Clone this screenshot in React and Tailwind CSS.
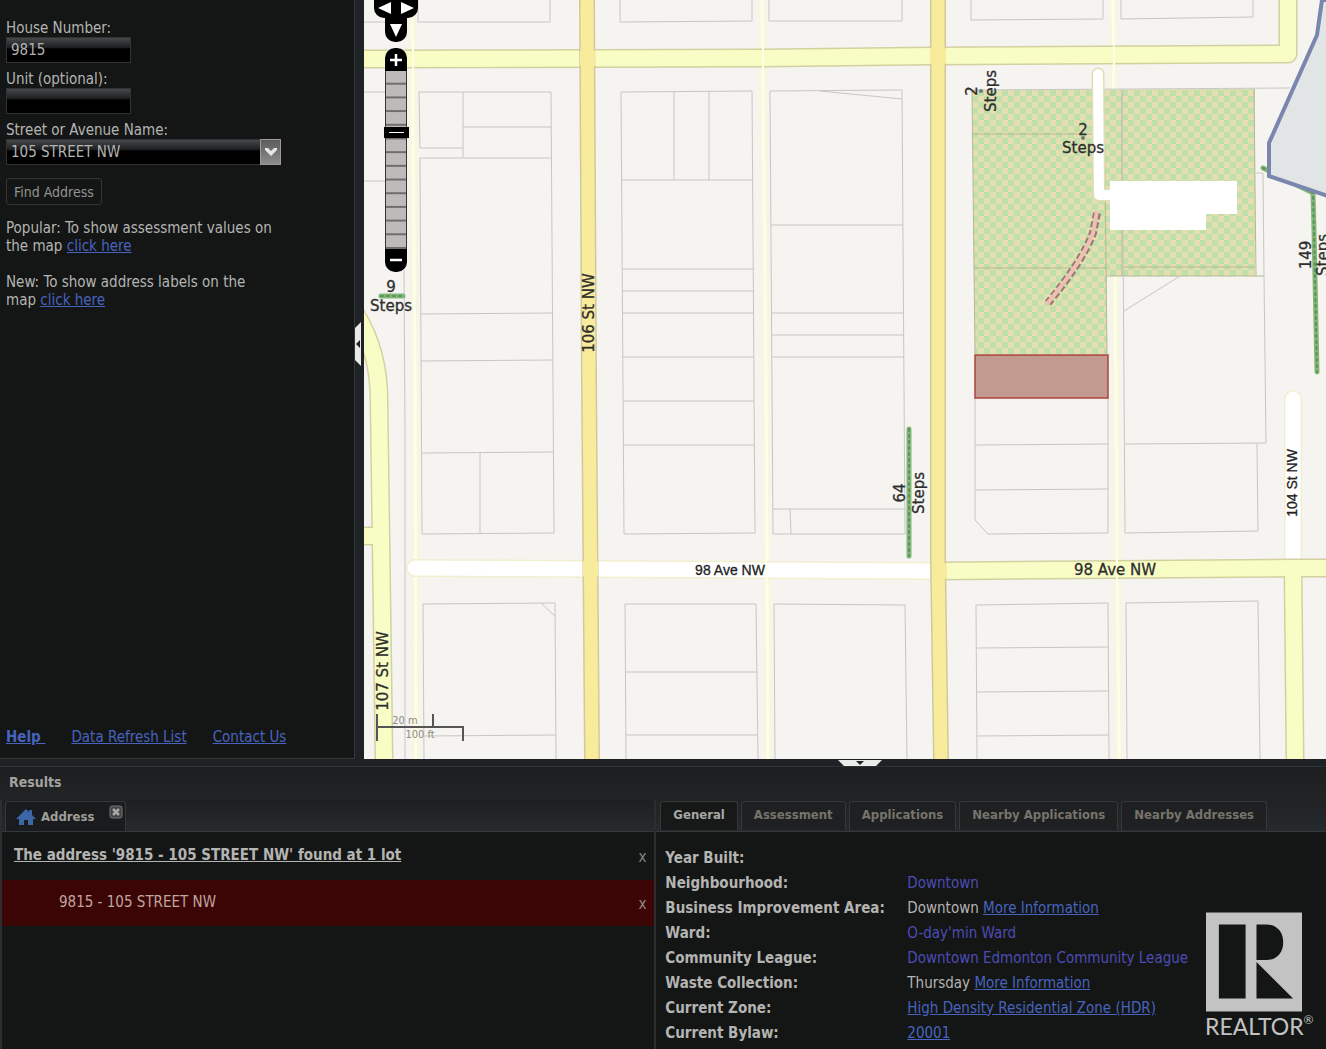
import { useState } from "react";

const LOT_LINES = [
  // far west
  "M364 22H405 M364 92H405 M364 181H386 M404 270L405 430V759",
  // 107 St to 106 St
  "M418 0V22L550 22V0",
  "M419 92H551L554 533L422 534L420 158H552 M419 92L420 148H463 M463 92V157 M463 127H551",
  "M421 314L553 313 M421 361L553 360 M422 453L554 452 M480 453V534",
  "M424 759L423 604L555 603L556 759 M542 604L555 616 M424 736L556 735",
  // 106 St to the lane
  "M620 0V22L752 21V0",
  "M621 92L752 91L755 533L624 534Z M674 92V180 M709 92V180 M621 180H753",
  "M622 269H754 M622 291H754 M622 313H754 M622 357H754 M623 401H754 M623 445H755",
  "M626 759L625 604L756 604L758 759 M625 672H757 M626 735H757",
  // lane to 105 St
  "M769 0V21H902V0",
  "M770 91L902 90L905 534H773Z M820 91L902 99 M771 225H903 M772 313H904 M772 335H904 M772 357H904",
  "M773 509H905 M790 509L791 534",
  "M775 759L774 604L905 605L907 759",
  // 105 St to the lane
  "M971 0V20L1103 19V0",
  "M975 398V520L988 534L1108 533V398 M975 445L1108 444 M976 490L1108 489",
  "M977 759L976 605L1108 603L1109 759 M977 648L1109 647 M977 692L1109 691 M977 736L1109 735",
  // lane to 104 St
  "M1121 0V19L1253 17V0",
  "M972 90L1290 88 M1264 275L1266 443L1125 444 M1124 311L1180 276 M1256 173H1263L1264 275",
  "M1257 444L1258 531L1125 533L1122 90",
  "M1127 759L1126 603L1258 601L1260 759",
];

const LANES = [
  "M412 0L415 380L416 759",
  "M762 0L766 380L768 759",
  "M1113 0L1117 540L1119 759",
];

const YELLOW_ROADS = [
  "M364 59L760 58L932 56L1288 54V0",
  "M346 300C368 328 379 360 379 400L381 540L384 759",
  "M364 536H381",
  "M940 571L1292 568H1326",
  "M1293 568L1295 759",
];

const MAIN_ROADS = ["M587 0L589 380L592 759", "M938 0V560L941 759"];

const WHITE_ROADS = ["M415 568L930 571", "M1293 399V560"];

const LABEL =
  "fill-[#2e2e2e] stroke-[#2e2e2e] font-['DejaVu_Sans',sans-serif] text-[15px]";
const SMALL_LABEL =
  "fill-[#222] stroke-[#222] font-['Liberation_Sans',Arial,sans-serif] text-[14px]";

function Roads({ paths, casing, fill, width, cap = "butt" }) {
  return (
    <g fill="none" strokeLinejoin="round" strokeLinecap={cap}>
      {paths.map((d) => (
        <path key={`c${d}`} d={d} stroke={casing} strokeWidth={width + 3} />
      ))}
      {paths.map((d) => (
        <path key={d} d={d} stroke={fill} strokeWidth={width} />
      ))}
    </g>
  );
}

function Steps({ d }) {
  return (
    <g fill="none" strokeLinecap="round">
      <path d={d} stroke="#82b778" strokeWidth="5" />
      <path d={d} stroke="#5f8f5a" strokeWidth="2" strokeDasharray="2 4" />
    </g>
  );
}

function StreetMap() {
  return (
    <svg
      className="absolute inset-0 h-full w-full"
      viewBox="364 0 962 759"
      preserveAspectRatio="xMinYMin slice"
      role="img"
      aria-label="Street map"
    >
      <defs>
        <pattern
          id="park"
          width="12"
          height="12"
          patternUnits="userSpaceOnUse"
        >
          <rect width="12" height="12" fill="#e4dfb0" />
          <rect width="6" height="6" fill="#c0dfaa" />
          <rect x="6" y="6" width="6" height="6" fill="#c0dfaa" />
        </pattern>
      </defs>

      <rect x="364" width="962" height="759" fill="#f5f4f1" />

      <g fill="none">
        {LANES.map((d) => (
          <path key={`h${d}`} d={d} stroke="#f7f6e2" strokeWidth="9" />
        ))}
        {LANES.map((d) => (
          <path key={d} d={d} stroke="#fdfee8" strokeWidth="3" />
        ))}
      </g>

      <path d="M972 90L1255 89V276H1107V354H975Z" fill="url(#park)" />
      <g stroke="#b7b795" fill="none">
        <path d="M972 90L975 354M1104 90L1107 354M972 134H1104M974 268H1107" />
        <path d="M1122 90V276M1254 89L1256 276M1123 267H1255M1107 276H1264" />
      </g>

      <g stroke="#c8c6c4" fill="none">
        {LOT_LINES.map((d) => (
          <path key={d} d={d} />
        ))}
      </g>

      <Roads
        paths={WHITE_ROADS}
        casing="#f2efcf"
        fill="#ffffff"
        width={15}
        cap="round"
      />
      <Roads
        paths={["M1098 74L1099 194M1099 195H1112"]}
        casing="#e0dfb4"
        fill="#ffffff"
        width={10}
        cap="round"
      />
      <path d="M1110 181H1237V214H1206V230H1110Z" fill="#fff" />
      <Roads paths={YELLOW_ROADS} casing="#d3d1a0" fill="#f8fdc5" width={16} />
      <Roads paths={MAIN_ROADS} casing="#d2c89b" fill="#f9eb9c" width={13} />
      {/* joins where the crossing streets meet the main roads */}
      <path
        d="M580 58H595M930 56H946M583 569H598M932 571H947"
        stroke="#f9eb9c"
        strokeWidth="15"
      />
      <path
        d="M413 48V69M763 48V68M1114 46V65M1117 559V580M766 560V580"
        stroke="#feffe6"
        strokeWidth="2"
      />

      <g fill="none">
        <path
          d="M1097 213L1093 233Q1082 262 1048 303"
          stroke="#9c7974"
          strokeWidth="8"
          strokeDasharray="6 3"
        />
        <path
          d="M1097 211L1093 233Q1082 262 1047 304"
          stroke="#efc0b2"
          strokeWidth="4"
        />
      </g>

      <Steps d="M1263 168L1313 193L1314 230L1317 372" />
      <path
        d="M1340 0H1322L1317 35L1269 143V176L1340 200Z"
        fill="#e1e5e6"
        stroke="#7a86ae"
        strokeWidth="4"
      />
      <Steps d="M909 429V556" />
      <Steps d="M381 296H403" />
      <circle cx="981" cy="91" r="2" fill="#777" />
      <circle cx="1083" cy="138" r="2" fill="#777" />

      <rect
        x="975"
        y="355"
        width="133"
        height="43"
        fill="#c39a90"
        stroke="#a8453b"
        strokeWidth="1.5"
      />

      <g textAnchor="middle" strokeWidth="0.3" className={LABEL}>
        <text x="1115" y="575">98 Ave NW</text>
        <text transform="translate(594 313) rotate(-90)">106 St NW</text>
        <text transform="translate(388 671) rotate(-90)">107 St NW</text>
        <text x="391" y="292">9</text>
        <text x="391" y="311">Steps</text>
        <text x="1083" y="135">2</text>
        <text x="1083" y="153">Steps</text>
        <text transform="translate(977 91) rotate(-90)">2</text>
        <text transform="translate(996 91) rotate(-90)">Steps</text>
        <text transform="translate(905 493) rotate(-90)">64</text>
        <text transform="translate(924 493) rotate(-90)">Steps</text>
        <text transform="translate(1311 255) rotate(-90)">149</text>
        <text transform="translate(1328 255) rotate(-90)">Steps</text>
      </g>
      <g textAnchor="middle" strokeWidth="0.3" className={SMALL_LABEL}>
        <text x="730" y="575">98 Ave NW</text>
        <text transform="translate(1297 483) rotate(-90)">104 St NW</text>
      </g>
    </svg>
  );
}

function MapControls() {
  const [zoom, setZoom] = useState(4);

  return (
    <div className="absolute left-[10px] top-0 flex w-11 flex-col items-center">
      <div className="flex h-[18px] w-full justify-between rounded-b-[10px] bg-black px-1">
        <button aria-label="Pan left">
          <svg width="14" height="18" viewBox="0 0 14 18" fill="#fff">
            <path d="M0 8L13 2V14Z" />
          </svg>
        </button>
        <button aria-label="Pan right">
          <svg width="14" height="18" viewBox="0 0 14 18" fill="#fff">
            <path d="M14 8L1 2V14Z" />
          </svg>
        </button>
      </div>
      <button
        aria-label="Pan down"
        className="flex h-6 w-[22px] justify-center rounded-b-[10px] bg-black pt-1"
      >
        <svg width="12" height="16" viewBox="0 0 12 16" fill="#fff">
          <path d="M0 2H12L6 15Z" />
        </svg>
      </button>
      <button
        aria-label="Zoom in"
        onClick={() => setZoom(Math.max(0, zoom - 1))}
        className="mt-[6px] flex h-[23px] w-[22px] items-center justify-center rounded-t-[10px] bg-black"
      >
        <svg width="12" height="13" viewBox="0 0 12 13" stroke="#fff">
          <path d="M0 7H12M6 1V13" strokeWidth="2.5" />
        </svg>
      </button>
      <input
        type="range"
        aria-label="Zoom level"
        min="0"
        max="12"
        value={zoom}
        onChange={(e) => setZoom(Number(e.target.value))}
        className="h-[178px] w-[22px] appearance-none border-l border-r border-[#333] bg-[linear-gradient(to_bottom,#bdbab9_12px,#6f6d6c_12px)] [background-size:100%_7.69%] [writing-mode:vertical-lr]
                   [&::-webkit-slider-thumb]:h-[11px] [&::-webkit-slider-thumb]:w-[25px] [&::-webkit-slider-thumb]:appearance-none
                   [&::-webkit-slider-thumb]:border-l-[5px] [&::-webkit-slider-thumb]:border-r-[5px] [&::-webkit-slider-thumb]:border-black
                   [&::-webkit-slider-thumb]:bg-[linear-gradient(to_bottom,#000_5px,#fff_5px,#fff_6px,#000_6px)]"
      />
      <button
        aria-label="Zoom out"
        onClick={() => setZoom(Math.min(12, zoom + 1))}
        className="flex h-[23px] w-[22px] items-center justify-center rounded-b-[10px] bg-black"
      >
        <svg width="12" height="12" viewBox="0 0 12 12" stroke="#fff">
          <path d="M0 5H12" strokeWidth="2.5" />
        </svg>
      </button>
    </div>
  );
}

function ScaleLine() {
  return (
    <div className="absolute bottom-[18px] left-3 text-center font-['DejaVu_Sans_Condensed','DejaVu_Sans',sans-serif] text-[11px] leading-[14px] text-[#8c8c86]">
      <div className="h-[14px] w-[58px] border-x-2 border-b-2 border-[#555]">
        20 m
      </div>
      <div className="-mt-[2px] h-[15px] w-[88px] border-x-2 border-t-2 border-[#555]">
        100 ft
      </div>
    </div>
  );
}

const FIELD =
  "block h-[26px] rounded-none border border-[#303334] bg-[linear-gradient(to_bottom,#46494b_0%,#1c1e1f_40%,#000_45%)] px-1 leading-[18px] text-[#b4b4b2] outline-none";
const LINK = "text-[#4763be] underline";

function SearchPanel() {
  return (
    <aside className="flex w-[355px] shrink-0 flex-col border-b border-r border-[#34383a] bg-[#141616] px-[6px] pt-[19px] leading-[18px]">
      <form onSubmit={(e) => e.preventDefault()}>
        <label htmlFor="house" className="block">
          House Number:
        </label>
        <input id="house" defaultValue="9815" className={`${FIELD} w-[125px]`} />

        <label htmlFor="unit" className="mt-[7px] block">
          Unit (optional):
        </label>
        <input id="unit" className={`${FIELD} w-[125px]`} />

        <label htmlFor="street" className="mt-[7px] block">
          Street or Avenue Name:
        </label>
        <div className="relative w-[275px]">
          <select
            id="street"
            className={`${FIELD} w-full appearance-none`}
          >
            <option>105 STREET NW</option>
          </select>
          <span className="pointer-events-none absolute right-0 top-0 flex h-[26px] w-[21px] items-center justify-center border border-[#9a9a9a] bg-gradient-to-b from-[#5c5c5c] to-[#8d8d8d]">
            <svg width="12" height="8" viewBox="0 0 12 8">
              <path d="M0 0H3L6 3L9 0H12V2L6 8L0 2Z" fill="#e6e6e6" />
            </svg>
          </span>
        </div>

        <button className="mt-[13px] h-[27px] rounded-[3px] border border-[#333637] px-[7px] text-[14px] text-[#939391]">
          Find Address
        </button>
      </form>

      <p className="mt-[14px] w-[270px]">
        Popular: To show assessment values on the map{" "}
        <a href="#values" className={LINK}>
          click here
        </a>
      </p>
      <p className="mt-[18px] w-[270px]">
        New: To show address labels on the map{" "}
        <a href="#labels" className={LINK}>
          click here
        </a>
      </p>

      <nav className="mt-auto flex gap-[26px] pb-3">
        <a href="#help" className={`${LINK} whitespace-pre font-bold`}>
          {"Help "}
        </a>
        <a href="#refresh" className={LINK}>
          Data Refresh List
        </a>
        <a href="#contact" className={LINK}>
          Contact Us
        </a>
      </nav>
    </aside>
  );
}

function ResultsList() {
  return (
    <section className="flex w-[49.5%] shrink-0 flex-col border-x-2 border-[#2b2e30] bg-[#141616]">
      <div className="flex h-8 items-end border-b border-[#34383a] bg-gradient-to-b from-[#1d2021] to-[#262a2d] pl-[3px]">
        <div className="flex h-[30px] w-[121px] rounded-t-[3px] border-x border-t border-[#34383a] bg-[#191b1c] pl-[10px]">
          <svg width="20" height="18" viewBox="0 0 20 18" className="mt-[6px]">
            <path
              d="M10 1L13 4V2H16V7L20 11H17V17H12V12H8V17H3V11H0Z"
              fill="#3b67a8"
            />
          </svg>
          <span className="ml-[5px] mt-[6px] text-[13px] font-bold leading-[18px] text-[#a09f9a]">
            Address
          </span>
          <button
            aria-label="Close tab"
            className="ml-auto mr-[2px] mt-[3px] h-[14px]"
          >
            <svg width="14" height="14" viewBox="0 0 14 14">
              <rect x="1" y="1" width="12" height="12" rx="2" fill="#444" stroke="#777" />
              <path d="M4 4L10 10M10 4L4 10" stroke="#a8a8a8" strokeWidth="2.5" />
            </svg>
          </button>
        </div>
      </div>

      <div className="flex h-[48px] items-start pl-3 pr-2 pt-[14px] leading-[18px]">
        <a href="#lots" className="font-bold underline">
          The address '9815 - 105 STREET NW' found at 1 lot
        </a>
        <button
          aria-label="Remove group"
          className="ml-auto mt-[2px] text-[#848482]"
        >
          x
        </button>
      </div>
      <div className="flex h-[46px] items-start bg-[#3a0504] pl-[57px] pr-2 pt-[13px] leading-[18px] text-[#c0a5a0]">
        <span>9815 - 105 STREET NW</span>
        <button
          aria-label="Remove result"
          className="ml-auto mt-[2px] text-[#a08480]"
        >
          x
        </button>
      </div>
    </section>
  );
}

const TABS = [
  "General",
  "Assessment",
  "Applications",
  "Nearby Applications",
  "Nearby Addresses",
];

const PLAIN = "text-[#4c4cb4]";

function DetailRow({ label, children }) {
  return (
    <tr className="h-[25px]">
      <th scope="row" className="w-[242px] p-0 text-left font-bold">
        {label}
      </th>
      <td className="p-0">{children}</td>
    </tr>
  );
}

function RealtorLogo() {
  return (
    <div className="ml-auto mr-3 mt-20 w-[109px] shrink-0 text-[#c3c3c3]">
      <svg width="98" height="100" viewBox="0 0 98 100" className="block pl-px">
        <rect width="97" height="100" fill="#c3c3c3" />
        <g fill="#141616">
          <path d="M13 12H40V87H13Z" />
          <path d="M51 12H61C72 12 78 20 78 30S72 48 61 48H51Z" />
          <path d="M51 50L88 87H51Z" />
        </g>
      </svg>
      <div className="flex items-start font-['Lato',sans-serif] text-[23px] leading-[28px]">
        REALTOR
        <span className="text-[12px] leading-[16px]">®</span>
      </div>
    </div>
  );
}

function DetailsPanel() {
  const [tab, setTab] = useState("General");

  return (
    <section className="min-w-0 flex-1 bg-[#141616]">
      <div className="flex h-8 items-end gap-[3px] border-b border-[#34383a] bg-gradient-to-b from-[#202224] to-[#262a2c] pb-px pl-1">
        {TABS.map((name) => (
          <button
            key={name}
            onClick={() => setTab(name)}
            className={`h-[29px] shrink-0 rounded-t-[3px] border-x border-t border-[#34383a] px-3 pb-[2px] text-[13px] font-bold ${
              tab === name
                ? "bg-[#171919] text-[#a7a7a2]"
                : "bg-[#1e2021] text-[#76746c]"
            }`}
          >
            {name}
          </button>
        ))}
      </div>
      <div className="flex pl-[9px]">
        <table className="mt-[13px] border-collapse self-start leading-[18px]">
          <tbody>
            <DetailRow label="Year Built:" />
            <DetailRow label="Neighbourhood:">
              <span className={PLAIN}>Downtown</span>
            </DetailRow>
            <DetailRow label="Business Improvement Area:">
              Downtown{" "}
              <a href="#area" className={LINK}>
                More Information
              </a>
            </DetailRow>
            <DetailRow label="Ward:">
              <span className={PLAIN}>O-day'min Ward</span>
            </DetailRow>
            <DetailRow label="Community League:">
              <span className={PLAIN}>Downtown Edmonton Community League</span>
            </DetailRow>
            <DetailRow label="Waste Collection:">
              Thursday{" "}
              <a href="#waste" className={LINK}>
                More Information
              </a>
            </DetailRow>
            <DetailRow label="Current Zone:">
              <a href="#zone" className={LINK}>
                High Density Residential Zone (HDR)
              </a>
            </DetailRow>
            <DetailRow label="Current Bylaw:">
              <a href="#bylaw" className={LINK}>
                20001
              </a>
            </DetailRow>
          </tbody>
        </table>
        <RealtorLogo />
      </div>
      <div className="h-1" />
    </section>
  );
}

export default function App() {
  return (
    <div className="flex min-h-screen flex-col bg-[#1f2224] font-['DejaVu_Sans_Condensed','DejaVu_Sans',sans-serif] text-[15px] text-[#b4b4b2]">
      <div className="flex flex-1">
        <SearchPanel />
        <div className="relative w-[9px] shrink-0">
          <button
            aria-label="Collapse search panel"
            className="absolute left-0 top-[322px]"
          >
            <svg width="6" height="44" viewBox="0 0 6 44">
              <path d="M6 0V44L0 38V6Z" fill="#e9e9e9" />
              <path d="M5 18V26L1 22Z" fill="#222" />
            </svg>
          </button>
        </div>
        <main className="relative flex-1 overflow-hidden">
          <StreetMap />
          <MapControls />
          <ScaleLine />
        </main>
      </div>

      <div className="flex h-[7px] justify-center pl-[394px]">
        <button aria-label="Collapse results" className="flex">
          <svg width="44" height="7" viewBox="0 0 44 7">
            <path d="M0 1H44L38 7H6Z" fill="#e9ece9" />
            <path d="M18 2H26L22 6Z" fill="#222" />
          </svg>
        </button>
      </div>

      <div className="border-t border-[#2f3335] bg-gradient-to-b from-[#1c1e20] to-[#222426]">
        <h2 className="px-[9px] pb-2 pt-[6px] text-[14px] font-bold leading-[19px] text-[#a3a39f]">
          Results
        </h2>
      </div>
      <div className="flex">
        <ResultsList />
        <DetailsPanel />
      </div>
    </div>
  );
}
